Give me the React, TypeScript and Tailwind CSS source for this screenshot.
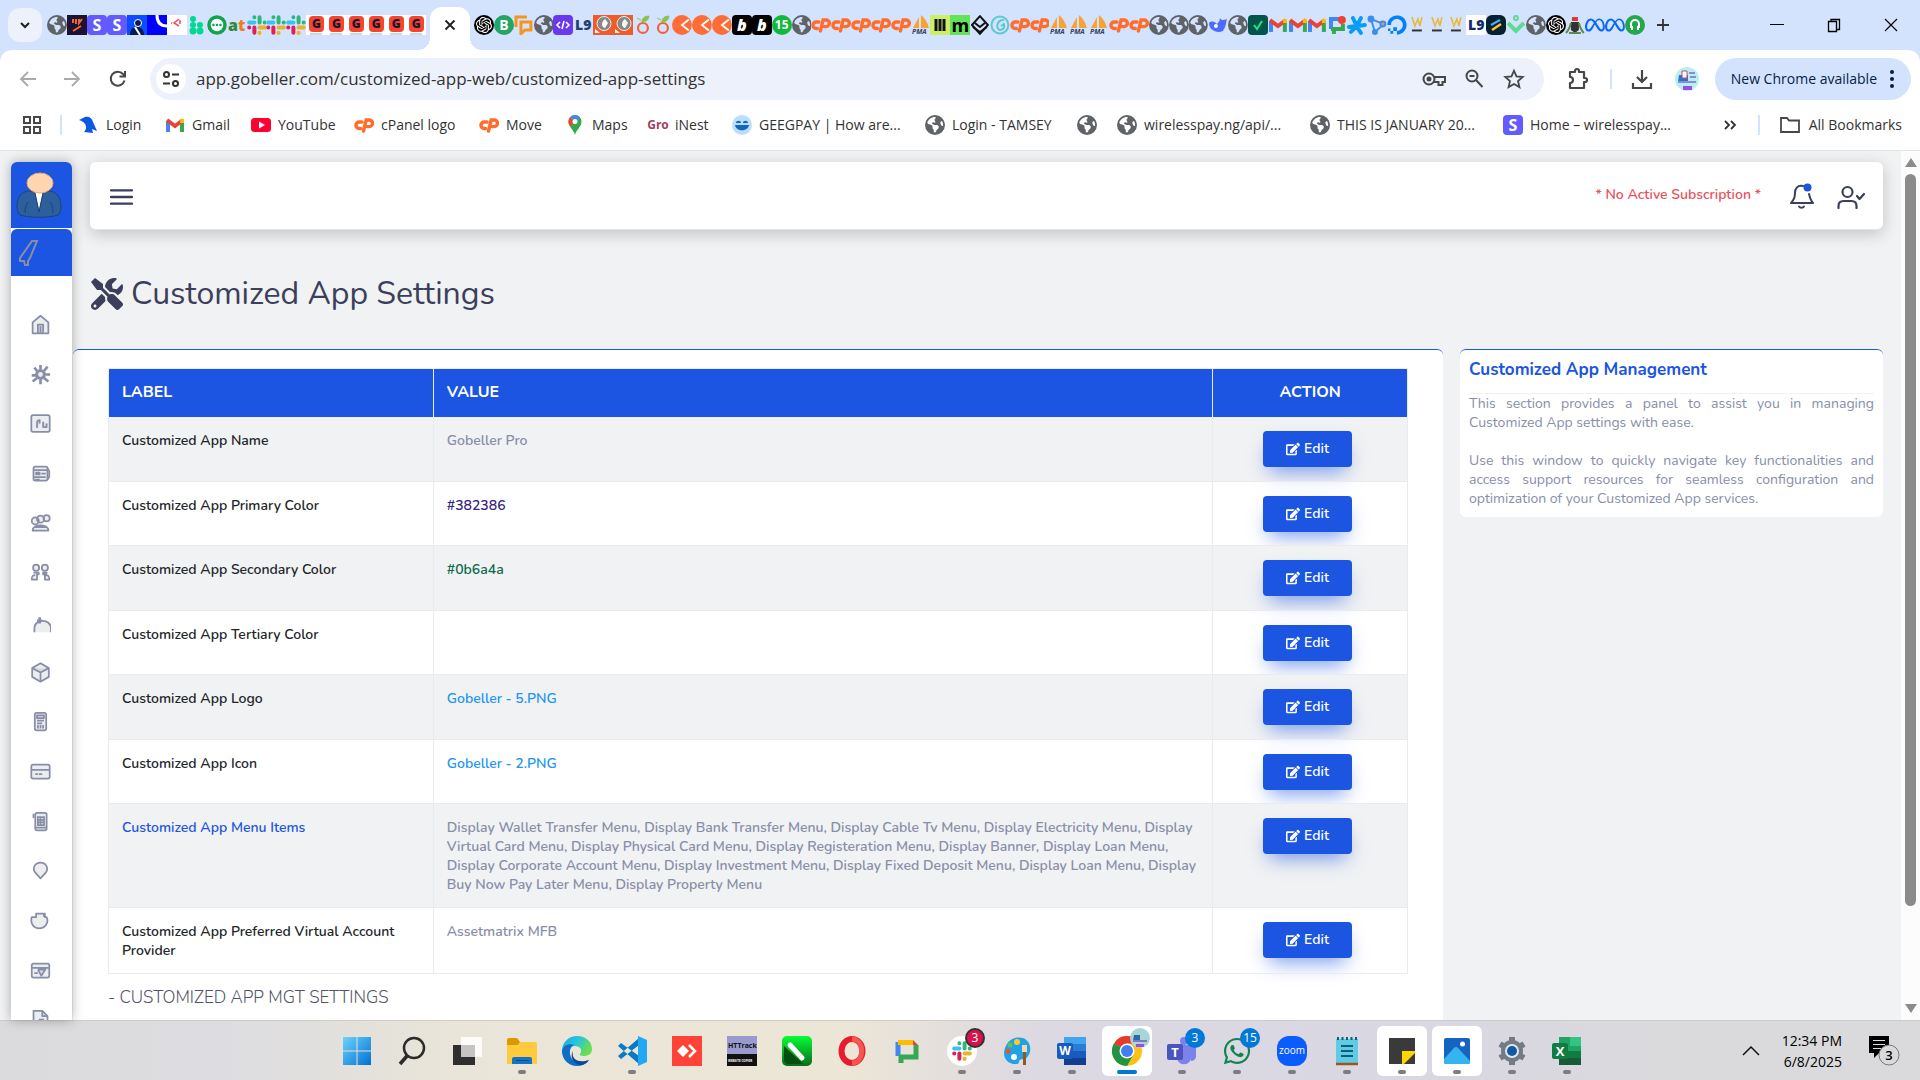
import type { ReactNode } from "react";
import { FaDigitalOcean, FaEdit, FaTools, FaWhatsapp } from "react-icons/fa";
import { FaEarthAmericas, FaMeta } from "react-icons/fa6";
import { SiOpenai } from "react-icons/si";

/* ---------- favicons ---------- */

const Globe = () => <FaEarthAmericas className="size-5 text-[#5f6368]" />;

const Tile = ({ className, children }: { className: string; children?: ReactNode }) => (
  <span className={`flex size-5 shrink-0 items-center justify-center leading-5 ${className}`}>{children}</span>
);

const Stripe = () => <Tile className="rounded-sm bg-[#635bff] text-base font-bold text-white">S</Tile>;

const CPanel = () => (
  <svg className="size-5" viewBox="0 0 20 20" fill="none" stroke="#ff6c2c" strokeWidth="3.4" strokeLinecap="round">
    <path d="M8 7H5.200a3.200 3.200 0 0 0 0 6.500H6.500" />
    <path d="m9.500 16 2.700-11h3a3.300 3.300 0 0 1 0 6.600h-2" />
  </svg>
);

const Slack = () => (
  <svg className="size-5" viewBox="0 0 20 20" strokeWidth="4" strokeLinecap="round">
    <path d="M2.200 7.400h5.200" stroke="#36c5f0" />
    <path d="M7.400 2.200v.1M12.600 2.200v5.200M17.800 7.400h-.1" stroke="#2eb67d" />
    <path d="M12.600 12.600h5.200M12.600 17.800v.1" stroke="#ecb22e" />
    <path d="M7.400 12.600v5.200M2.200 12.600h.1" stroke="#e01e5a" />
  </svg>
);

const Gmail = () => (
  <svg className="size-5" viewBox="0 0 20 20" fill="none" strokeWidth="4">
    <path d="M3 17V6" stroke="#4285f4" />
    <path d="M17 17V6" stroke="#34a853" />
    <path d="m2 5 8 6 8-6" stroke="#ea4335" />
    <path d="M17 8V4" stroke="#fbbc04" />
  </svg>
);

const Gobeller = () => (
  <Tile className="flex-col bg-white">
    <span className="flex h-4 w-[15px] items-center justify-center rounded bg-[#f4452f] text-xs font-black text-[#1a1330]">G</span>
    <span className="mt-px h-0.5 w-3 bg-gray-300" />
  </Tile>
);

const Pma = () => (
  <svg className="size-5" viewBox="0 0 20 20">
    <path d="M8 2 2 13h6zM10 0v13h8C17 8 14 3 10 0z" fill="#f7a233" />
    <text x="1" y="19" fontSize="7" fontStyle="italic" fontWeight="700" fill="#3a3f5c">PMA</text>
  </svg>
);

const Kite = () => (
  <Tile className="bg-[#f15a29]">
    <svg className="size-5" viewBox="0 0 20 20">
      <circle cx="11" cy="8.500" r="7" fill="#888" stroke="#eee" strokeWidth="1" />
      <path d="M12 13c-4-1-4-6 0-9l3 4z" fill="#fff" />
      <path d="M2 14v4h5z" fill="#fff" />
    </svg>
  </Tile>
);

const Fruit = () => (
  <svg className="size-5" viewBox="0 0 20 20" fill="none">
    <circle cx="10" cy="13" r="5" stroke="#f2603c" strokeWidth="2.200" />
    <path d="M9 7c0-4 3-6 7-6 0 4-3 6-7 6zM8 5 4 3" fill="#8cc152" stroke="#8cc152" />
  </svg>
);

const Chevron = () => (
  <svg className="size-5" viewBox="0 0 20 20">
    <circle cx="10" cy="10" r="10" fill="#ff6c37" />
    <path d="M17 4.500 10 10l7 5.500" fill="none" stroke="#fff" strokeWidth="1.800" />
  </svg>
);

const L9 = () => <Tile className="text-sm font-black text-[#1d3f7a]">L9</Tile>;
const Bolt = () => <Tile className="rounded bg-black text-base font-black text-white italic">b</Tile>;
const OpenAi = () => (
  <Tile className="rounded-full bg-black">
    <SiOpenai className="size-4 text-white" />
  </Tile>
);
const Winky = () => (
  <svg className="size-5" viewBox="0 0 20 20">
    <path d="m5 2 3 9 3-7 2 7 2-9" fill="none" stroke="#e7b93c" strokeWidth="1.600" />
    <path d="M5 15.500h10" stroke="#333" strokeWidth="2" />
  </svg>
);

const leftTabs: ReactNode[] = [
  <Globe />,
  <Tile className="bg-[#1c1233]">
    <svg className="size-4" viewBox="0 0 16 16" fill="none" stroke="#f26a2e" strokeWidth="2">
      <path d="M4 2v4M7 2v5M10 2v4l3-4M4 14l8-5" />
    </svg>
  </Tile>,
  <Stripe />,
  <Stripe />,
  <Tile className="bg-[#0b4dff]">
    <svg className="size-5" viewBox="0 0 20 20">
      <circle cx="11" cy="8" r="3.500" fill="#0a1a4a" stroke="#fff" />
      <path d="M3 20c0-6 3-8 7-8s7 3 7 8z" fill="#0a1a4a" />
      <path d="m8 12 5 8" stroke="#fff" strokeWidth="2" />
    </svg>
  </Tile>,
  <Tile className="bg-[#0000ff]">
    <svg className="size-5" viewBox="0 0 20 20" fill="none" stroke="#fff" strokeWidth="3">
      <path d="M10 0c0 8 4 11 10 11" />
    </svg>
  </Tile>,
  <Tile className="bg-white">
    <svg className="size-5" viewBox="0 0 20 20" fill="none" stroke="#f0506e" strokeWidth="1.600">
      <path d="m12 4-5 4 5 3M4 8h1M13 5v4" />
    </svg>
  </Tile>,
  <svg className="size-5" viewBox="0 0 20 20" fill="#00d991">
    <circle cx="6" cy="4" r="3" />
    <circle cx="6" cy="10" r="3" />
    <circle cx="6" cy="16" r="3.500" />
    <circle cx="13" cy="10" r="3" />
    <circle cx="13" cy="16" r="3.500" />
  </svg>,
  <svg className="size-5" viewBox="0 0 20 20" fill="#10a350">
    <circle cx="10" cy="10" r="8" fill="#fff" stroke="#10a350" strokeWidth="3.500" />
    <circle cx="6.500" cy="10" r="1.300" />
    <circle cx="10" cy="10" r="1.300" />
    <circle cx="13.500" cy="10" r="1.300" />
  </svg>,
  <Tile className="text-base font-black text-[#2d8a3e]">
    <span>a<span className="text-[#f47b20]">t</span></span>
  </Tile>,
  <Slack />,
  <Slack />,
  <Slack />,
  <Gobeller />,
  <Gobeller />,
  <Gobeller />,
  <Gobeller />,
  <Gobeller />,
  <Gobeller />,
];

const rightTabs: ReactNode[] = [
  <OpenAi />,
  <Tile className="rounded-full bg-[#22a565] text-sm font-bold text-white">B</Tile>,
  <svg className="size-5" viewBox="0 0 20 20" fill="none" stroke="#f7941d" strokeWidth="3">
    <path d="M2 12V2h11M7 7h10v8h-6l-4 4z" />
  </svg>,
  <Globe />,
  <Tile className="rounded bg-[#6938ef]">
    <svg className="size-4" viewBox="0 0 16 16" fill="none" stroke="#fff" strokeWidth="1.600">
      <path d="M5 5 2 8l3 3M11 5l3 3-3 3M9 4l-2 8" />
    </svg>
  </Tile>,
  <L9 />,
  <Kite />,
  <Kite />,
  <Fruit />,
  <Fruit />,
  <Chevron />,
  <Chevron />,
  <Chevron />,
  <Bolt />,
  <Bolt />,
  <Tile className="rounded-full bg-[#10b93c] text-xs font-bold text-white">15</Tile>,
  <Globe />,
  <CPanel />,
  <CPanel />,
  <CPanel />,
  <CPanel />,
  <CPanel />,
  <Pma />,
  <Tile className="bg-[#cdee68]">
    <svg className="size-4" viewBox="0 0 16 16" stroke="#111" strokeWidth="3">
      <path d="M4 2v12M8 2v12M12 2v12" />
    </svg>
  </Tile>,
  <Tile className="bg-[#62e35a] text-lg font-bold text-black">m</Tile>,
  <svg className="size-5" viewBox="0 0 20 20" fill="none" stroke="#111" strokeWidth="2" strokeLinejoin="round">
    <path d="m10 1 8 9-8 9-8-9z" />
    <path d="m5 8 5 4 5-4M3 12l7 5 7-5" />
  </svg>,
  <svg className="size-5" viewBox="0 0 20 20" fill="none" stroke="#5bc8d2" strokeWidth="2">
    <circle cx="10" cy="10" r="8.500" />
    <path d="M14 5c-8 0-8 9-4 10 4 0 5-4 4-6l-3 2" />
  </svg>,
  <CPanel />,
  <CPanel />,
  <Pma />,
  <Pma />,
  <Pma />,
  <CPanel />,
  <CPanel />,
  <Globe />,
  <Globe />,
  <Globe />,
  <svg className="size-5" viewBox="0 0 20 20">
    <path d="M1 8c3-3 6-1 8 1 2-2 3-3 3-6 2 3 4 2 7 1-1 5-1 8-4 12-6 3-14-1-14-8z" fill="#4d6bfe" />
    <circle cx="8" cy="11" r="2" fill="#fff" />
  </svg>,
  <Globe />,
  <Tile className="rounded bg-[#00564a]">
    <svg className="size-4" viewBox="0 0 16 16" fill="none" stroke="#27e07d" strokeWidth="2">
      <path d="m4 8 3 4 5-8" />
    </svg>
  </Tile>,
  <Gmail />,
  <Gmail />,
  <Gmail />,
  <svg className="size-5" viewBox="0 0 20 20" fill="none" strokeWidth="4">
    <path d="M4 14V4h8" stroke="#4285f4" />
    <path d="M4 14h12V9" stroke="#34a853" />
    <path d="M7 14v5" stroke="#34a853" />
    <circle cx="15" cy="5" r="4" fill="#ea4335" />
  </svg>,
  <svg className="size-5" viewBox="0 0 20 20" stroke="#0a9cf5" strokeWidth="4" strokeLinecap="round">
    <path d="M9 9 6 3M11 9l3-6M11 11l7-1M9 11l-7 1M10 12l4 6M9 12l-5 5" />
  </svg>,
  <svg className="size-5" viewBox="0 0 20 20" stroke="#3b8ff0" strokeWidth="2" fill="#3b8ff0">
    <path d="M4 4 8 17 17 9z" fill="none" />
    <circle cx="4" cy="4" r="2.500" />
    <circle cx="8" cy="17" r="2" />
    <circle cx="16" cy="9" r="2.500" fill="#f58a5b" />
  </svg>,
  <FaDigitalOcean className="size-5 text-[#0080ff]" />,
  <Winky />,
  <Winky />,
  <Winky />,
  <Tile className="bg-white text-sm font-black text-[#12296b]">L9</Tile>,
  <Tile className="rounded-md bg-[#04212f]">
    <svg className="size-4" viewBox="0 0 16 16" strokeWidth="2.500">
      <path d="m3 8 9-5" stroke="#4da3ff" />
      <path d="m4 13 9-6" stroke="#ffc233" />
    </svg>
  </Tile>,
  <svg className="size-5" viewBox="0 0 20 20" fill="none" stroke="#5cdb95" strokeWidth="4">
    <circle cx="10" cy="3" r="1" />
    <path d="m2 8 8 8 8-8" />
  </svg>,
  <Globe />,
  <OpenAi />,
  <svg className="size-5" viewBox="0 0 20 20">
    <path d="M6 7h8v8l-4 3-4-3z" fill="#333" />
    <path d="M7 2h6v4H7z" fill="#d33" />
    <path d="M1 18c3-3 4-6 5-10M19 18c-3-3-4-6-5-10M4 18h12" stroke="#5b8a4a" strokeWidth="2" fill="none" />
  </svg>,
  <FaMeta className="size-5 text-[#0866ff]" />,
  <FaMeta className="size-5 text-[#0866ff]" />,
  <Tile className="rounded-full bg-[#22a84b]">
    <svg className="size-4" viewBox="0 0 16 16" fill="none" stroke="#fff" strokeWidth="2">
      <path d="M4 11V7a4 4 0 0 1 8 0v4M5 9v4M11 9v4" />
    </svg>
  </Tile>,
];

const bookmarks: { label: string; width: string; icon: ReactNode }[] = [
  {
    label: "Login",
    width: "w-[86px]",
    icon: (
      <svg className="size-5" viewBox="0 0 20 20" fill="#0b57e8">
        <path d="M0 5 6 2c4-1 7 1 8 5l4 9-5-2 1 4-9-1c2-2 3-5 1-8C5 7 3 6 0 5z" />
      </svg>
    ),
  },
  { label: "Gmail", width: "w-[86px]", icon: <Gmail /> },
  {
    label: "YouTube",
    width: "w-[103px]",
    icon: (
      <svg className="size-5" viewBox="0 0 20 20">
        <rect y="3" width="20" height="14" rx="3.500" fill="#f03" />
        <path d="m8 6.500 6 3.500-6 3.500z" fill="#fff" />
      </svg>
    ),
  },
  { label: "cPanel logo", width: "w-[125px]", icon: <CPanel /> },
  { label: "Move", width: "w-[86px]", icon: <CPanel /> },
  {
    label: "Maps",
    width: "w-[83px]",
    icon: (
      <svg className="size-5" viewBox="0 0 20 20">
        <path d="M10 20C9 15 3.500 12 3.500 6.500A6.500 6.500 0 0 1 10 0c3.600 0 6.500 3 6.500 6.500C16.500 12 11 15 10 20z" fill="#34a853" />
        <path d="M3.500 6.500c0 2 .8 3.500 1.800 5L13 3V.7A6.500 6.500 0 0 0 3.500 6.500z" fill="#fbbc04" />
        <path d="M3.500 6.500A6.500 6.500 0 0 1 5 2.300l5 4.200-4.700 5c-1-1.500-1.800-3-1.800-5z" fill="#ea4335" />
        <path d="M5 2.300A6.500 6.500 0 0 1 15 2.300l-5 4.200z" fill="#4285f4" />
        <circle cx="10" cy="6.500" r="2.500" fill="#fff" />
      </svg>
    ),
  },
  { label: "iNest", width: "w-[84px]", icon: <span className="text-xs font-bold text-[#a2405f]">Gro</span> },
  {
    label: "GEEGPAY | How are...",
    width: "w-[193px]",
    icon: (
      <svg className="size-5" viewBox="0 0 20 20">
        <circle cx="10" cy="10" r="10" fill="#bbdefb" />
        <path d="M3 10h14c-1 7-13 7-14 0zM4 8c0-3 5-3 5 0M11 8c0-3 5-3 5 0" fill="#1565c0" />
      </svg>
    ),
  },
  { label: "Login - TAMSEY", width: "w-[152px]", icon: <Globe /> },
  { label: "", width: "w-5", icon: <Globe /> },
  { label: "wirelesspay.ng/api/...", width: "w-[193px]", icon: <Globe /> },
  { label: "THIS IS JANUARY 20...", width: "w-[193px]", icon: <Globe /> },
  { label: "Home – wirelesspay...", width: "w-[193px]", icon: <Stripe /> },
];

const BrowserChrome = () => (
  <header className="shrink-0 bg-[#d3e3fd] font-['Open_Sans',sans-serif] text-[#1f1f1f]">
    <div className="flex h-[50px] items-center">
      <button aria-label="Search tabs" className="ml-2 flex h-[34px] w-[34px] items-center justify-center rounded-xl bg-[#ecf1fb]">
        <svg className="size-4" viewBox="0 0 16 16" fill="none" stroke="#1f1f1f" strokeWidth="2">
          <path d="m4 6 4 4 4-4" />
        </svg>
      </button>
      <div className="ml-[5px] flex w-[379px]">
        {leftTabs.map((tab, i) => (
          <div key={i} className="flex min-w-0 flex-1">{tab}</div>
        ))}
      </div>
      <div className="relative mx-1 flex h-[43px] w-10 items-center justify-center self-end rounded-t-xl bg-white pb-2 before:absolute before:bottom-0 before:-left-3 before:size-3 before:bg-[radial-gradient(circle_at_0_0,transparent_12px,#fff_12px)] after:absolute after:-right-3 after:bottom-0 after:size-3 after:bg-[radial-gradient(circle_at_100%_0,transparent_12px,#fff_12px)]">
        <button aria-label="Close tab">
          <svg className="size-4" viewBox="0 0 16 16" stroke="#1f1f1f" strokeWidth="1.800">
            <path d="m3.500 3.500 9 9M12.500 3.500l-9 9" />
          </svg>
        </button>
      </div>
      <div className="flex w-[1171px]">
        {rightTabs.map((tab, i) => (
          <div key={i} className="flex min-w-0 flex-1">{tab}</div>
        ))}
      </div>
      <button aria-label="New tab" className="ml-2">
        <svg className="size-5" viewBox="0 0 20 20" stroke="#333" strokeWidth="1.800">
          <path d="M10 4v12M4 10h12" />
        </svg>
      </button>
      <div className="mr-[21px] ml-auto flex items-center gap-[41px]">
        <button aria-label="Minimize">
          <svg className="size-4" viewBox="0 0 16 16" stroke="#000"><path d="M1 7.500h14" /></svg>
        </button>
        <button aria-label="Restore">
          <svg className="size-4" viewBox="0 0 16 16" fill="none" stroke="#000" strokeWidth="1.300">
            <path d="M2.500 4.500h8v10h-8zM5 4.500v-2h8.500v10h-3" />
          </svg>
        </button>
        <button aria-label="Close window">
          <svg className="size-4" viewBox="0 0 16 16" stroke="#000" strokeWidth="1.200"><path d="m2 2 12 12M14 2 2 14" /></svg>
        </button>
      </div>
    </div>

    <div className="flex h-[58px] items-center rounded-t-xl bg-white">
      <button aria-label="Back" className="ml-[18px]">
        <svg className="size-5" viewBox="0 0 20 20" fill="none" stroke="#aaa" strokeWidth="1.800"><path d="M18 10H3M10 3l-7 7 7 7" /></svg>
      </button>
      <button aria-label="Forward" className="ml-[24px]">
        <svg className="size-5" viewBox="0 0 20 20" fill="none" stroke="#aaa" strokeWidth="1.800"><path d="M2 10h15M10 3l7 7-7 7" /></svg>
      </button>
      <button aria-label="Reload" className="ml-[26px]">
        <svg className="size-5" viewBox="0 0 20 20" fill="none" stroke="#474747" strokeWidth="2">
          <path d="M16.500 11.500A7 7 0 1 1 15 5l2 2M17 2v5.500h-5.500" />
        </svg>
      </button>
      <div className="ml-[22px] flex h-[42px] min-w-0 flex-1 items-center rounded-full bg-[#ecf1fb] pr-[19px] pl-[6px]">
        <button aria-label="Site information" className="flex size-[30px] items-center justify-center rounded-full bg-white">
          <svg className="size-[18px]" viewBox="0 0 18 18" fill="none" stroke="#333" strokeWidth="2">
            <circle cx="4.500" cy="4.500" r="2.500" />
            <path d="M10 4.500h7M1 13.500h7" />
            <circle cx="13.500" cy="13.500" r="2.500" />
          </svg>
        </button>
        <input
          aria-label="Address"
          className="ml-[10px] min-w-0 flex-1 bg-transparent text-[17px] text-[#333] outline-none"
          defaultValue="app.gobeller.com/customized-app-web/customized-app-settings"
        />
        <button aria-label="Passwords">
          <svg className="size-6" viewBox="0 0 24 24" fill="none" stroke="#474747" strokeWidth="2">
            <circle cx="7" cy="12" r="5.500" />
            <circle cx="7" cy="12" r="1.500" fill="#474747" />
            <path d="M12 10h11v5h-2.500v3h-4v-3H12" />
          </svg>
        </button>
        <button aria-label="Zoom" className="ml-[16px]">
          <svg className="size-6" viewBox="0 0 24 24" fill="none" stroke="#474747" strokeWidth="2">
            <circle cx="10" cy="9" r="5.500" />
            <path d="m14 13 6.500 7M7.500 9h5" />
          </svg>
        </button>
        <button aria-label="Bookmark this page" className="ml-[17px]">
          <svg className="size-[22px]" viewBox="0 0 24 24" fill="none" stroke="#474747" strokeWidth="2">
            <path d="m12 3 2.700 6.200 6.800.6-5.100 4.500 1.500 6.600L12 17.400l-5.900 3.500 1.500-6.600-5.100-4.500 6.800-.6z" />
          </svg>
        </button>
      </div>
      <button aria-label="Extensions" className="ml-[22px]">
        <svg className="size-6" viewBox="0 0 24 24" fill="none" stroke="#474747" strokeWidth="2.200" strokeLinejoin="round">
          <path d="M4 5h5V4a2 2 0 0 1 4 0v1h5v6h1a2 2 0 0 1 0 4h-1v6H4v-5c4 0 4-6 0-6z" />
        </svg>
      </button>
      <span className="ml-[20px] h-5 w-0.5 bg-[#d3e3fd]" />
      <button aria-label="Downloads" className="ml-[18px]">
        <svg className="size-6" viewBox="0 0 24 24" fill="none" stroke="#474747" strokeWidth="2.200">
          <path d="M12 3v12M7 10l5 5 5-5M3 16v5h18v-5" />
        </svg>
      </button>
      <button aria-label="Profile" className="ml-[21px]">
        <svg className="size-6" viewBox="0 0 24 24">
          <circle cx="12" cy="12" r="12" fill="#b8f0ee" />
          <path d="M4 8h9v7H3z" fill="#2775c9" />
          <path d="M7 4h5v7H7z" fill="#fff" stroke="#d0446a" />
          <path d="M14 6h6M15 10h6M3 15h18" stroke="#8a8be0" strokeWidth="2" />
          <path d="M8 19h9v4H8z" fill="#9c4be8" />
        </svg>
      </button>
      <button className="mr-[9px] ml-[16px] flex h-[42px] items-center gap-3 rounded-full bg-[#d3e3fd] px-4 text-sm text-[#041e49]">
        New Chrome available
        <svg className="h-5 w-1.5" viewBox="0 0 6 20" fill="#041e49">
          <circle cx="3" cy="3" r="2" /><circle cx="3" cy="10" r="2" /><circle cx="3" cy="17" r="2" />
        </svg>
      </button>
    </div>

    <nav aria-label="Bookmarks" className="flex h-[43px] items-center border-b border-[#e3e5e1] bg-white pb-2 text-sm whitespace-nowrap text-[#333]">
      <button aria-label="Apps" className="ml-[23px]">
        <svg className="size-[18px]" viewBox="0 0 18 18" fill="none" stroke="#474747" strokeWidth="2">
          <path d="M1 1h6v6H1zM11 1h6v6h-6zM1 11h6v6H1zM11 11h6v6h-6z" />
        </svg>
      </button>
      <span className="ml-[19px] h-5 w-0.5 bg-[#d3e3fd]" />
      <div className="ml-[17px] flex items-center">
        {bookmarks.map((b, i) => (
          <a key={i} href="#" aria-label={b.label || "Bookmark"} className={`flex shrink-0 items-center gap-[7px] ${b.width} ${b.label ? "" : "mr-5"}`}>
            <span className="flex w-5 shrink-0 justify-center">{b.icon}</span>
            {b.label}
          </a>
        ))}
      </div>
      <button aria-label="More bookmarks" className="ml-auto">
        <svg className="size-4" viewBox="0 0 16 16" fill="none" stroke="#333" strokeWidth="1.800"><path d="m3 4 4 4-4 4M9 4l4 4-4 4" /></svg>
      </button>
      <span className="ml-[20px] h-5 w-0.5 bg-[#d3e3fd]" />
      <a href="#" className="mr-[18px] ml-[20px] flex items-center gap-[9px]">
        <svg className="size-5" viewBox="0 0 20 20" fill="none" stroke="#474747" strokeWidth="1.800">
          <path d="M1 3h6l2 2.500h10V17H1z" />
        </svg>
        All Bookmarks
      </a>
    </nav>
  </header>
);

/* ---------- side menu ---------- */

const menuIcons: { name: string; path: ReactNode }[] = [
  { name: "Dashboard", path: <><path d="M3 9.500 12 2l9 7.500V22H3z" /><path d="M9 22V12h6v10M12 14v8" /></> },
  {
    name: "Settings",
    path: (
      <>
        <circle cx="12" cy="12" r="4.500" strokeWidth="3.500" />
        <path d="M12 1v5M12 18v5M2 13h5M18 12h5M5 4l3 4M16 16l5 4M20 3l-4 5M8 16l-5 4" strokeWidth="3" />
      </>
    ),
  },
  { name: "Activity", path: <><rect x="1.500" y="2.500" width="21" height="19" rx="2" /><path d="M8 17v-6a3 3 0 0 1 3-3v4" /><path d="M15 10v6h4v-4" /></> },
  { name: "News", path: <><rect x="4" y="4" width="16" height="16" rx="2" /><path d="M20 6l2 3v7l-2 3M4 8h16M4 16h14M7 11h4v2H7zM13 12h5M6 19h5" /></> },
  { name: "Groups", path: <><circle cx="6" cy="9" r="4" /><circle cx="12" cy="7" r="4" /><circle cx="19" cy="6" r="3.500" /><path d="M3 20c0-8 18-8 18 0zM5 16h14" /></> },
  { name: "Users", path: <><circle cx="7" cy="6.500" r="3.500" /><circle cx="17" cy="6.500" r="3.500" /><path d="M4 12h6v2H8v6H2c0-4 1-5 4-5M14 12h5l-1 3c3 0 4 1 4 5h-5v-6h-3" /></> },
  { name: "Analytics", path: <><path d="M5 23v-4c0-12 19-12 19 0v4" /><path d="M11 6v7M8 10h6" strokeWidth="3" /></> },
  { name: "Packages", path: <><path d="m12 1.500 9.500 5.500v10L12 22.500 2.500 17V7z" /><path d="M2.500 7 12 12l9.500-5M12 12v10" /></> },
  { name: "Terminals", path: <><rect x="5.500" y="2" width="13" height="20" rx="2" /><path d="M8 5h8v3H8zM8 11h8M8 14h6M9 16v4M12 16v4M15 16v4" /></> },
  { name: "Cards", path: <><rect x="1.500" y="4" width="21" height="16" rx="2" /><path d="M2 10h20M6 15h3M10 15h4" /></> },
  { name: "Ledger", path: <><rect x="6" y="2" width="13" height="20" rx="2" /><path d="M4 3v5M8 7h9M8 10h9M8 13h9M8 16h9M9 6v11M12 6v11M16 6v11M6 19h13" /></> },
  { name: "Locations", path: <path d="M12 21 6 14.500C2 9 6 3 12 3s10 6 6 11.500z" /> },
  { name: "Savings", path: <path d="M2 8h5V4h10v4h2c3 7-2 13-8.500 13S0 15 2 8zM16 4v4" /> },
  { name: "Cheques", path: <><rect x="2" y="4" width="20" height="16" rx="2" /><path d="M2 9h20M9 11l4 7 5-8M5 15h4M9 11h8" /></> },
  { name: "Documents", path: <><path d="M4 22V2h10l6 6v14z" /><path d="M14 2v6h6M10 12h6" /></> },
];

const Sidebar = () => (
  <aside className="z-10 mt-[11px] ml-[11px] flex w-[61px] shrink-0 flex-col rounded-t-md bg-white shadow-[0_0_12px_rgba(0,0,0,0.3)]">
    <a href="#" aria-label="Profile" className="flex h-[66px] shrink-0 items-center rounded-t-md bg-[#1b55e2] pl-[5px]">
      <svg className="h-[46px] w-[46px]" viewBox="0 0 46 46">
        <path d="M1 34c0-8 4-14 11-15h22c7 1 11 7 11 15 0 4-1 7-3 9-9 3-29 3-38 0-2-2-3-5-3-9z" fill="#2c5f9b" stroke="#1b4479" />
        <path d="M19 20h8l-4 18z" fill="#fff" />
        <path d="M9 41c0-5 1-8 3-11M37 41c0-5-1-8-3-11M19 21l4 19 4-19" fill="none" stroke="#1b4479" />
        <ellipse cx="24" cy="11" rx="13" ry="10" fill="#ffd6b0" stroke="#f0a76b" />
      </svg>
    </a>
    <a href="#" aria-label="Brand" className="mt-px flex h-[47px] shrink-0 items-center rounded-t-md bg-[#1b55e2] pl-[7px]">
      <svg className="h-[26px] w-[22px]" viewBox="0 0 22 26" fill="none" stroke="#888ea8" strokeWidth="2">
        <path d="M19 1h-5L2 18v3h4l1 4h3v-4l2-3z" />
      </svg>
    </a>
    <nav aria-label="Main menu" className="mt-[23px] flex min-h-0 flex-1 flex-col overflow-hidden">
      {menuIcons.map((item) => (
        <a key={item.name} href="#" aria-label={item.name} className="flex h-[50px] shrink-0 items-center justify-center pr-0.5 nth-[3n]:h-[49px]">
          <svg className="size-[21px]" viewBox="0 0 24 24" fill="rgba(0,23,55,0.08)" stroke="#888ea8" strokeWidth="2" strokeLinejoin="round">
            {item.path}
          </svg>
        </a>
      ))}
    </nav>
  </aside>
);

/* ---------- settings page ---------- */

interface Setting {
  label: string;
  value: string;
  labelClass?: string;
  valueClass?: string;
  file?: boolean;
}

const settings: Setting[] = [
  { label: "Customized App Name", value: "Gobeller Pro" },
  { label: "Customized App Primary Color", value: "#382386", valueClass: "text-[#382386]" },
  { label: "Customized App Secondary Color", value: "#0b6a4a", valueClass: "text-[#0b6a4a]" },
  { label: "Customized App Tertiary Color", value: "" },
  { label: "Customized App Logo", value: "Gobeller - 5.PNG", file: true },
  { label: "Customized App Icon", value: "Gobeller - 2.PNG", file: true },
  {
    label: "Customized App Menu Items",
    labelClass: "text-[#1b55e2]",
    value:
      "Display Wallet Transfer Menu, Display Bank Transfer Menu, Display Cable Tv Menu, Display Electricity Menu, Display Virtual Card Menu, Display Physical Card Menu, Display Registeration Menu, Display Banner, Display Loan Menu, Display Corporate Account Menu, Display Investment Menu, Display Fixed Deposit Menu, Display Loan Menu, Display Buy Now Pay Later Menu, Display Property Menu",
  },
  { label: "Customized App Preferred Virtual Account Provider", value: "Assetmatrix MFB" },
];

const SettingsTable = () => (
  <table className="w-full table-fixed border-collapse border border-[#e9ecef] text-left text-sm leading-[19px] font-semibold">
    <thead>
      <tr className="h-12 bg-[#1b55e2] text-base leading-[19px] text-white">
        <th className="w-1/4 border-r border-[#e9ecef] px-[13px] font-bold">LABEL</th>
        <th className="w-3/5 border-r border-[#e9ecef] px-[13px] font-bold">VALUE</th>
        <th className="w-[15%] px-[13px] text-center font-bold">ACTION</th>
      </tr>
    </thead>
    <tbody>
      {settings.map((s) => (
        <tr key={s.label} className="h-16 border-b border-[#e9ecef] align-top last:h-[66px] odd:h-[65px] odd:bg-[#f1f2f3]">
          <td className={`border-r border-[#e9ecef] px-[13px] pt-[14px] ${s.labelClass ?? "text-[#212529]"}`}>{s.label}</td>
          <td className={`border-r border-[#e9ecef] px-[13px] pt-[14px] pb-[13px] ${s.valueClass ?? "text-[#888ea8]"}`}>
            {s.file ? <a href="#" className="text-[#2196f3]">{s.value}</a> : s.value}
          </td>
          <td className="pt-[14px] pr-[5px] pb-3">
            <button className="mx-auto flex h-9 w-[89px] items-center justify-center gap-1 rounded bg-[#1b55e2] text-sm font-semibold text-white shadow-[0_10px_20px_-6px_rgba(27,85,226,0.6)]">
              <FaEdit className="size-3.5" />
              Edit
            </button>
          </td>
        </tr>
      ))}
    </tbody>
  </table>
);

const TopBar = () => (
  <div className="mx-[18px] mt-[11px] flex h-[68px] shrink-0 items-center rounded-md border-b border-[#e0e6ed] bg-white pr-[18px] pl-5 shadow-[0_4px_16px_rgba(0,0,0,0.2)]">
    <button aria-label="Toggle menu" className="pt-0.5">
      <svg className="h-[18px] w-[23px]" viewBox="0 0 24 18" stroke="#3b3f5c" strokeWidth="2.400" strokeLinecap="round">
        <path d="M1 2h22M1 9h22M1 16h22" />
      </svg>
    </button>
    <span className="mr-[28px] mb-0.5 ml-auto text-sm font-semibold text-[#e7515a]">* No Active Subscription *</span>
    <button aria-label="Notifications" className="mr-[22px]">
      <svg className="size-[26px]" viewBox="0 0 26 26" fill="none" stroke="#3b3f5c" strokeWidth="2" strokeLinecap="round" strokeLinejoin="round">
        <path d="M14 3C8 2 6 6 6 10c0 6-2 8-4 10h22c-2-2-3-5-4-9M10 23.500c1 1.500 4 1.500 5 0" />
        <circle cx="18.500" cy="4.500" r="4" fill="#1b55e2" stroke="none" />
      </svg>
    </button>
    <button aria-label="Account" className="pt-0.5">
      <svg className="h-6 w-7" viewBox="0 0 28 24" fill="none" stroke="#3b3f5c" strokeWidth="2.200" strokeLinecap="round" strokeLinejoin="round">
        <circle cx="10.500" cy="7" r="5" />
        <path d="M1.500 23v-2c0-3 2-5 5-5h8c3 0 5 2 5 5v2M20 11l2.500 3L27 9" />
      </svg>
    </button>
  </div>
);

const SettingsPage = () => (
  <main className="flex min-w-0 flex-1 flex-col overflow-hidden">
    <TopBar />
    <h1 className="mt-10 ml-[19px] flex h-12 shrink-0 items-center gap-2 text-[32px] font-normal text-[#3b3f5c]">
      <FaTools className="size-8" />
      Customized App Settings
    </h1>
    <div className="mt-[31px] mr-[18px] ml-px flex min-h-0 flex-1 items-start gap-[17px]">
      <section className="min-w-0 flex-1 self-stretch rounded-t-md border-t border-[#1b55e2] bg-white px-[35px] pt-[18px]">
        <SettingsTable />
        <p className="mt-3 text-[17px] leading-6 font-light text-[#515365]">- CUSTOMIZED APP MGT SETTINGS</p>
      </section>
      <section className="w-[423px] shrink-0 rounded-md border-t border-[#1b55e2] bg-white px-[9px] pb-[9px] text-sm leading-[19px] text-[#888ea8]">
        <h2 className="border-b border-[#f1f2f3] pt-[10px] pb-[13px] text-[17px] leading-5 font-bold text-[#1b55e2]">Customized App Management</h2>
        <p className="text-justify">This section provides a panel to assist you in managing Customized App settings with ease.</p>
        <p className="mt-[19px] text-justify">
          Use this window to quickly navigate key functionalities and access support resources for seamless configuration and optimization of your Customized App services.
        </p>
      </section>
    </div>
  </main>
);

const ScrollTrack = () => (
  <div className="flex w-[19px] shrink-0 flex-col items-center bg-[#fcfcfc] py-[6px]">
    <svg className="h-[10px] w-3" viewBox="0 0 12 10" fill="#8b8b8b"><path d="m6 1 6 9H0z" /></svg>
    <div className="mt-[7px] w-[11px] flex-[731] rounded-full bg-[#8b8b8b]" />
    <div className="flex-[98]" />
    <svg className="h-[10px] w-3" viewBox="0 0 12 10" fill="#8b8b8b"><path d="M0 0h12l-6 9z" /></svg>
  </div>
);

/* ---------- taskbar ---------- */

interface TaskApp {
  name: string;
  icon: ReactNode;
  open?: boolean;
  active?: boolean;
  lit?: boolean;
}

const Badge = ({ className, children }: { className: string; children: ReactNode }) => (
  <span className={`absolute -top-2 -right-2 flex size-5 items-center justify-center rounded-full text-xs text-white ${className}`}>{children}</span>
);

const apps: TaskApp[] = [
  {
    name: "Start",
    icon: (
      <svg className="size-[30px]" viewBox="0 0 30 30">
        <defs><linearGradient id="win" x1="0" y1="0" x2="1" y2="1"><stop stopColor="#6fd3fb" /><stop offset="1" stopColor="#0070d1" /></linearGradient></defs>
        <path d="M1 1h13.500v13.500H1zM15.500 1H29v13.500H15.500zM1 15.500h13.500V29H1zM15.500 15.500H29V29H15.500z" fill="url(#win)" />
      </svg>
    ),
  },
  {
    name: "Search",
    icon: (
      <svg className="size-[30px]" viewBox="0 0 30 30" fill="none" stroke="#2b2b2b">
        <circle cx="17" cy="12" r="10" strokeWidth="2.500" />
        <path d="m10 20-7 8" strokeWidth="3.500" />
      </svg>
    ),
  },
  {
    name: "Task view",
    icon: (
      <svg className="size-[30px]" viewBox="0 0 30 30">
        <path d="M1 9h22v20H1z" fill="#2f2f2f" /><path d="M9 1h21v20H9z" fill="#fff" opacity=".85" /><path d="M9 9h14v12H9z" fill="#c4c4c4" />
      </svg>
    ),
  },
  {
    name: "File Explorer",
    open: true,
    icon: (
      <svg className="size-[30px]" viewBox="0 0 30 30">
        <path d="M0 4q0-2 2-2h8l3 4h15v7H0z" fill="#d99a00" /><path d="M0 9h11l2-3h15q2 0 2 2v20H0z" fill="#ffcb3d" /><path d="M5 28v-5q0-2 2-2h16q2 0 2 2v5z" fill="#1573c5" /><path d="M9 24.500h13" stroke="#0a4a8c" />
      </svg>
    ),
  },
  {
    name: "Edge",
    icon: (
      <svg className="size-[30px]" viewBox="0 0 30 30">
        <defs><linearGradient id="edge" x1="0" y1="0" x2="1" y2=".5"><stop stopColor="#1ea7e8" /><stop offset=".5" stopColor="#27c4dc" /><stop offset="1" stopColor="#6be04a" /></linearGradient></defs>
        <path d="M0 15C0 6 7 0 15 0c9 0 15 6 15 13 0 5-4 7-8 7-3 0-5-1-4-2 3-4 0-8-5-8C6 10 2 14 0 19z" fill="url(#edge)" />
        <path d="M0 15c1-5 6-8 12-6-5 2-6 11 0 16 4 3 10 3 15-1-3 4-7 6-12 6C6 30 0 23 0 15z" fill="#0d6ec4" />
        <path d="M11 15c-2 7 4 13 16 9-2 3-4 4-7 5-8 0-13-8-9-14z" fill="#0b4794" />
      </svg>
    ),
  },
  {
    name: "Visual Studio Code",
    open: true,
    icon: (
      <svg className="size-[30px]" viewBox="0 0 30 30">
        <path d="M1 20 22 2v7L4 23zM1 10l21 18v-8L4 7z" fill="#0a78c8" />
        <path d="m21 0 9 4v22l-9 4z" fill="#22a7f2" />
      </svg>
    ),
  },
  {
    name: "AnyDesk",
    icon: (
      <svg className="size-[30px]" viewBox="0 0 30 30">
        <path d="M0 0h30v30H0z" fill="#ff4336" /><path d="m11 9 6 6-6 6-6-6z" fill="#fff" /><path d="m17 9 6 6-6 6" fill="none" stroke="#fff" strokeWidth="2.500" />
      </svg>
    ),
  },
  {
    name: "HTTrack",
    icon: (
      <svg className="size-[30px]" viewBox="0 0 30 30">
        <path d="M0 0h30v18H0z" fill="#9a9ad0" /><path d="M0 18h30v12H0z" fill="#111" />
        <text x="1" y="12" fontSize="7" fontWeight="700" fill="#111">HTTrack</text>
        <text x="1" y="26" fontSize="3" fontWeight="700" fill="#fff">WEBSITE COPIER</text>
      </svg>
    ),
  },
  {
    name: "Notes",
    icon: (
      <svg className="size-[30px]" viewBox="0 0 30 30">
        <defs><linearGradient id="pen" x1="0" y1="0" x2="0" y2="1"><stop stopColor="#05ff35" /><stop offset="1" stopColor="#096b1c" /></linearGradient></defs>
        <rect width="30" height="30" rx="5" fill="url(#pen)" /><path d="M2 10v14q1 4 5 4h14z" fill="#064d10" /><path d="m8 9 12 13" stroke="#fff" strokeWidth="5" strokeLinecap="round" />
      </svg>
    ),
  },
  {
    name: "Opera",
    icon: (
      <svg className="size-[30px]" viewBox="0 0 30 30"><ellipse cx="15" cy="15" rx="10.500" ry="12" fill="none" stroke="#e81c2e" strokeWidth="6" /><path d="M15 3c13 0 13 24 0 24" fill="none" stroke="#f5564f" strokeWidth="5" /></svg>
    ),
  },
  {
    name: "Google Chat",
    icon: (
      <svg className="size-[30px]" viewBox="0 0 30 30" fill="none" strokeWidth="5">
        <path d="M6 6v14" stroke="#4285f4" /><path d="M6 6.500h15" stroke="#fbbc04" /><path d="M21 4v5h5z" fill="#ea4335" /><path d="M24 9v12H9v6" stroke="#34a853" />
      </svg>
    ),
  },
  {
    name: "Slack",
    open: true,
    icon: (
      <>
        <span className="flex size-[30px] items-center justify-center rounded-full bg-white"><Slack /></span>
        <Badge className="border-2 border-[#333] bg-[#d8124a]">3</Badge>
      </>
    ),
  },
  {
    name: "Paint",
    open: true,
    icon: (
      <svg className="size-[30px]" viewBox="0 0 30 30">
        <path d="M3 12C6 3 14 0 21 2c8 3 9 13 5 18-3 5-6 2-8 4s0 4-4 4C4 28 0 20 3 12z" fill="#1fa2e8" />
        <circle cx="15" cy="6" r="3" fill="#ffca28" /><circle cx="8" cy="9" r="2.500" fill="#5ac54f" /><circle cx="6" cy="15" r="2.500" fill="#e5562f" /><circle cx="12" cy="21" r="3" fill="#fff" />
        <path d="M20 9h5v7h-5z" fill="#efd9b4" /><path d="M22.500 16v13" stroke="#9a5622" strokeWidth="3" />
      </svg>
    ),
  },
  {
    name: "Word",
    open: true,
    icon: (
      <svg className="size-[30px]" viewBox="0 0 30 30">
        <path d="M7 1h22v7H7z" fill="#41a5ee" /><path d="M7 8h22v7H7z" fill="#2b7cd3" /><path d="M7 15h22v7H7z" fill="#185abd" /><path d="M7 22h22v7H7z" fill="#103f91" />
        <rect y="7" width="16" height="16" rx="2" fill="#185abd" /><text x="8" y="19" textAnchor="middle" fontSize="12" fontWeight="700" fill="#fff">W</text>
      </svg>
    ),
  },
  {
    name: "Chrome",
    open: true,
    active: true,
    lit: true,
    icon: (
      <>
        <svg className="size-[30px]" viewBox="0 0 30 30">
          <circle cx="15" cy="15" r="15" fill="#fbc116" /><path d="M15 15 2 7.500A15 15 0 0 1 28 7.500H15z" fill="#e33b2e" /><path d="M2 7.500A15 15 0 0 0 15 30l6.500-11.500L15 15z" fill="#229342" />
          <circle cx="15" cy="15" r="7.500" fill="#fff" /><circle cx="15" cy="15" r="6" fill="#3f7ff0" />
        </svg>
        <Badge className="bg-[#a9d5d6]">
          <svg className="size-5" viewBox="0 0 20 20"><path d="M4 7h6v6H3z" fill="#2f6aa8" /><path d="M3 13h14" stroke="#7a7ac0" strokeWidth="2" /><path d="M6 16h8v3H6z" fill="#9c4be8" /></svg>
        </Badge>
      </>
    ),
  },
  {
    name: "Teams",
    open: true,
    icon: (
      <>
        <svg className="size-[30px]" viewBox="0 0 30 30">
          <circle cx="17" cy="5" r="4" fill="#7b83eb" /><path d="M10 9h14v14c-2 7-12 7-14 0zM24 11h5v10q-1 4-5 4z" fill="#7b83eb" />
          <rect y="8" width="16" height="16" rx="2" fill="#4b53bc" /><text x="8" y="20.500" textAnchor="middle" fontSize="13" fontWeight="700" fill="#fff">T</text>
        </svg>
        <Badge className="bg-[#0078d7]">3</Badge>
      </>
    ),
  },
  {
    name: "WhatsApp",
    open: true,
    icon: (
      <>
        <FaWhatsapp className="size-[30px] text-[#12854f]" />
        <Badge className="bg-[#0078d7]">15</Badge>
      </>
    ),
  },
  { name: "Zoom", open: true, icon: <span className="flex size-[30px] items-center justify-center rounded-xl bg-[#0b5cff] text-[10px] text-white">zoom</span> },
  {
    name: "Notepad",
    open: true,
    icon: (
      <svg className="size-[30px]" viewBox="0 0 30 30">
        <path d="M4 3h22v25H4z" fill="#5fcbe4" /><path d="M4 28h22" stroke="#a3541a" strokeWidth="2.500" /><path d="M6 1v3M10.500 1v3M15 1v3M19.500 1v3M24 1v3M9 10h12M9 15h12M9 20h12" stroke="#0f5e78" strokeWidth="2" />
      </svg>
    ),
  },
  {
    name: "Sticky Notes",
    open: true,
    lit: true,
    icon: <svg className="size-[30px]" viewBox="0 0 30 30"><path d="M2 2h26v26H2z" fill="#3a3a3a" /><path d="M15 15h13v2L17 28h-2z" fill="#ffd400" /></svg>,
  },
  {
    name: "Photos",
    open: true,
    lit: true,
    icon: (
      <svg className="size-[30px]" viewBox="0 0 30 30">
        <rect x="2" y="2" width="26" height="26" rx="2" fill="#1565c0" /><path d="m2 23 10-11q2-2 4 0l12 13v1q0 2-2 2H4q-2 0-2-2z" fill="#35b5f0" /><circle cx="20.500" cy="8" r="2.500" fill="#fff" />
      </svg>
    ),
  },
  {
    name: "Settings",
    open: true,
    icon: (
      <svg className="size-[30px]" viewBox="0 0 30 30">
        <circle cx="15" cy="15" r="11" fill="#737b84" /><path d="M15 1v28M3 8l24 14M27 8 3 22" stroke="#737b84" strokeWidth="6" />
        <circle cx="15" cy="15" r="7" fill="#e4e8ec" /><circle cx="15" cy="15" r="5" fill="#0f5aa6" />
      </svg>
    ),
  },
  {
    name: "Excel",
    open: true,
    icon: (
      <svg className="size-[30px]" viewBox="0 0 30 30">
        <path d="M7 1h22v28H7z" fill="#21a366" /><path d="M18 1h11v9H18z" fill="#33c481" /><path d="M7 15h22v14H7z" fill="#107c41" /><path d="M7 22h22v7H7z" fill="#185c37" />
        <rect y="7" width="16" height="16" rx="2" fill="#107c41" /><text x="8" y="19.500" textAnchor="middle" fontSize="13" fontWeight="700" fill="#fff">X</text>
      </svg>
    ),
  },
];

const Taskbar = () => (
  <footer className="flex h-[60px] shrink-0 items-center border-t border-[#cfcdc6] bg-[linear-gradient(90deg,#dbdbdd_0%,#dddce0_12%,#e9e5d8_24%,#ece6d6_44%,#dcd9e2_54%,#d9d7e2_75%,#dadadc_88%)] pl-1 font-['Open_Sans',sans-serif]">
    <div className="flex-1" />
    <div className="flex gap-[5px]">
      {apps.map((app) => (
        <button
          key={app.name}
          aria-label={app.name}
          className={`relative flex h-[50px] w-[50px] items-center justify-center rounded-md ${app.lit ? "bg-white" : ""}`}
        >
          <span className="relative flex">{app.icon}</span>
          {app.open && (
            <span className={`absolute bottom-0.5 h-1 rounded-full ${app.active ? "w-5 bg-[#0078d7]" : "w-2 bg-[#7d7c80]"}`} />
          )}
        </button>
      ))}
    </div>
    <div className="flex flex-1 items-center justify-end">
      <button aria-label="Show hidden icons">
        <svg className="h-4 w-[18px]" viewBox="0 0 18 16" fill="none" stroke="#111" strokeWidth="1.500"><path d="m1 12 8-8 8 8" /></svg>
      </button>
      <div className="ml-[22px] text-right text-sm leading-[21px] text-black">
        <div>12:34 PM</div>
        <div>6/8/2025</div>
      </div>
      <button aria-label="Notification center" className="mr-[20px] ml-[27px]">
        <svg className="size-[31px]" viewBox="0 0 31 31">
          <path d="M0 1h20v17H10l-5 5v-5H0z" fill="#000" /><path d="M4 5.500h12M4 9.500h12M4 13.500h8" stroke="#ddd" />
          <circle cx="20" cy="20" r="10" fill="#dadadc" stroke="#777" /><text x="20" y="24.500" textAnchor="middle" fontSize="13" fontWeight="600">3</text>
        </svg>
      </button>
    </div>
  </footer>
);

const App = () => (
  <div className="flex h-screen flex-col overflow-hidden">
    <BrowserChrome />
    <div className="flex min-h-0 flex-1 bg-[#f1f2f3] font-['Nunito','Noto_Sans',sans-serif]">
      <Sidebar />
      <SettingsPage />
      <ScrollTrack />
    </div>
    <Taskbar />
  </div>
);

export default App;
